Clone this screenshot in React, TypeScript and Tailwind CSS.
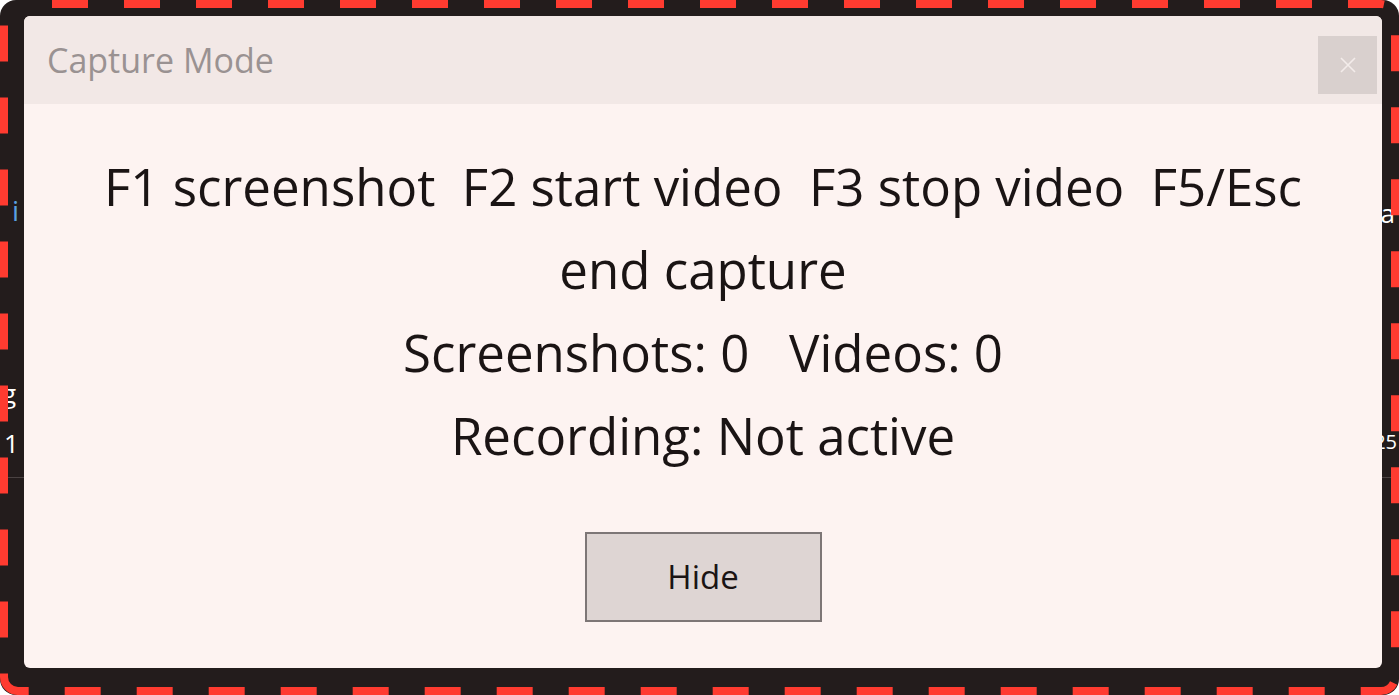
import React from "react";

const font = { fontFamily: '"Open Sans", "Noto Sans", sans-serif' };

function CloseGlyph() {
    return (
        <svg width="20" height="20" viewBox="0 0 20 20" fill="none">
            <path d="M3 3L17 17M17 3L3 17" stroke="#f3ecea" strokeWidth="1.6" />
        </svg>
    );
}

export default function App() {
    return (
        <div className="w-[1399px] h-[695px] bg-white" style={font}>
            <div className="relative w-full h-full rounded-[16px] bg-[#231c1c] overflow-hidden pt-[16px] pl-[24px] pr-[17px] pb-[27px]">
                {/* bits of the app behind the dialog */}
                <span className="absolute left-[12px] top-[196px] text-[28px] leading-none text-[#5aa0e0]">i</span>
                <span className="absolute left-[2px] top-[380px] text-[26px] leading-none text-white">g</span>
                <span className="absolute left-[4px] top-[430px] text-[26px] leading-none text-white">1</span>
                <span className="absolute right-[4px] top-[200px] text-[26px] leading-none text-white">a</span>
                <span className="absolute right-[2px] top-[432px] text-[20px] leading-none text-white">25</span>
                <div className="absolute left-0 right-0 top-[477px] h-px bg-[#4a4242]" />

                <div className="relative z-10 flex flex-col w-full h-full rounded-[6px] bg-[#fdf3f1] overflow-hidden">
                    <div className="flex items-start justify-between h-[88px] shrink-0 bg-[#f2e8e6]">
                        <span className="pl-[23px] pt-[27px] text-[34px] leading-none text-[#9a9292]">
                            Capture Mode
                        </span>
                        <button className="mt-[20px] mr-[5px] w-[59px] h-[58px] flex items-center justify-center bg-[#d9d0ce]">
                            <CloseGlyph />
                        </button>
                    </div>

                    <div className="flex flex-col items-center pt-[41px]">
                        <p className="w-[1240px] text-center whitespace-pre-wrap text-[51px] leading-[83px] text-[#1a1414]">
                            {"F1 screenshot  F2 start video  F3 stop video  F5/Esc end capture"}
                        </p>
                        <p className="text-center whitespace-pre text-[51px] leading-[83px] text-[#1a1414]">
                            {"Screenshots: 0   Videos: 0"}
                        </p>
                        <p className="text-center text-[51px] leading-[83px] text-[#1a1414]">
                            Recording: Not active
                        </p>
                        <button className="mt-[55px] w-[237px] h-[90px] border-2 border-[#7d7676] bg-[#ded5d3] text-[33px] text-[#1a1414]">
                            Hide
                        </button>
                    </div>
                </div>

                <svg className="absolute inset-0 z-20 pointer-events-none" width="1399" height="695">
                    <rect
                        x="4"
                        y="4"
                        width="1391"
                        height="687"
                        rx="14"
                        fill="none"
                        stroke="#ff3b30"
                        strokeWidth="8"
                        strokeDasharray="36 36"
                        strokeDashoffset="-34"
                    />
                </svg>
            </div>
        </div>
    );
}
